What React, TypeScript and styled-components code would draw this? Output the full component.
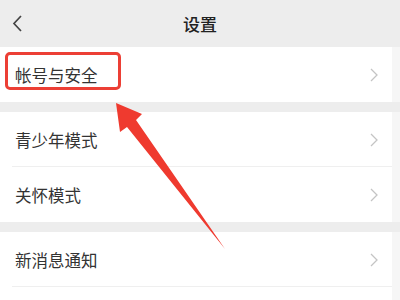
import styled, { createGlobalStyle } from 'styled-components';

const GlobalStyle = createGlobalStyle`
  html, body {
    margin: 0;
    padding: 0;
    background: #ededed;
    font-family: "Noto Sans CJK SC", "Noto Sans", sans-serif;
  }
`;

const Page = styled.div`
  position: relative;
  width: 400px;
  height: 300px;
  overflow: hidden;
  background: #ededed;
  display: flex;
  flex-direction: column;
`;

const Header = styled.div`
  height: 47px;
  flex-shrink: 0;
  display: flex;
  align-items: center;
  justify-content: center;
  position: relative;
  font-size: 17px;
  font-weight: 500;
  color: #222;
`;

const Back = styled.div`
  position: absolute;
  left: 11px;
  top: 14px;
  width: 16px;
  height: 20px;
`;

const Section = styled.div<{ $gap?: number; $fill?: boolean }>`
  margin-top: ${(p) => p.$gap ?? 0}px;
  flex: ${(p) => (p.$fill ? '1' : '0 0 auto')};
  background: #fff;
  border-right: 8px solid #f6f6f6;
`;

const Row = styled.div<{ $line?: boolean }>`
  position: relative;
  height: 55px;
  display: flex;
  align-items: center;
  justify-content: space-between;
  padding: 0 14px 0 15px;
  font-size: 16.5px;
  color: #333;
  &::after {
    content: '';
    display: ${(p) => (p.$line ? 'block' : 'none')};
    position: absolute;
    left: 12px;
    right: 0;
    bottom: 0;
    height: 1px;
    background: #efefef;
  }
`;

const Highlight = styled.div`
  position: absolute;
  left: 5px;
  top: 5px;
  width: 110px;
  height: 32px;
  border: 3px solid #ec3f35;
  border-radius: 5px;
`;

const Arrow = styled.svg`
  position: absolute;
  left: 0;
  top: 0;
  pointer-events: none;
`;

const Chevron = () => (
  <svg width="8" height="14" viewBox="0 0 8 14">
    <path d="M1 1 L7 7 L1 13" fill="none" stroke="#c4c4c4" strokeWidth="1.3" />
  </svg>
);

const items = [
  [{ label: '帐号与安全', mark: true }],
  [{ label: '青少年模式', line: true }, { label: '关怀模式' }],
  [{ label: '新消息通知', line: true }],
];

export default function App() {
  return (
    <Page>
      <GlobalStyle />
      <Header>
        <Back>
          <svg width="16" height="20" viewBox="0 0 16 20">
            <path d="M10 2 L3 9.5 L10 17" fill="none" stroke="#444" strokeWidth="1.7" />
          </svg>
        </Back>
        设置
      </Header>
      {items.map((group, gi) => (
        <Section key={gi} $gap={gi === 0 ? 0 : 10} $fill={gi === items.length - 1}>
          {group.map((it: { label: string; line?: boolean; mark?: boolean }) => (
            <Row key={it.label} $line={it.line}>
              <span>{it.label}</span>
              <Chevron />
              {it.mark && <Highlight />}
            </Row>
          ))}
        </Section>
      ))}
      <Arrow width="400" height="300" viewBox="0 0 400 300">
        <polygon
          points="116,103 142,114 136,120 225,249 127,127 120,132"
          fill="#ef3a2f"
        />
      </Arrow>
    </Page>
  );
}
